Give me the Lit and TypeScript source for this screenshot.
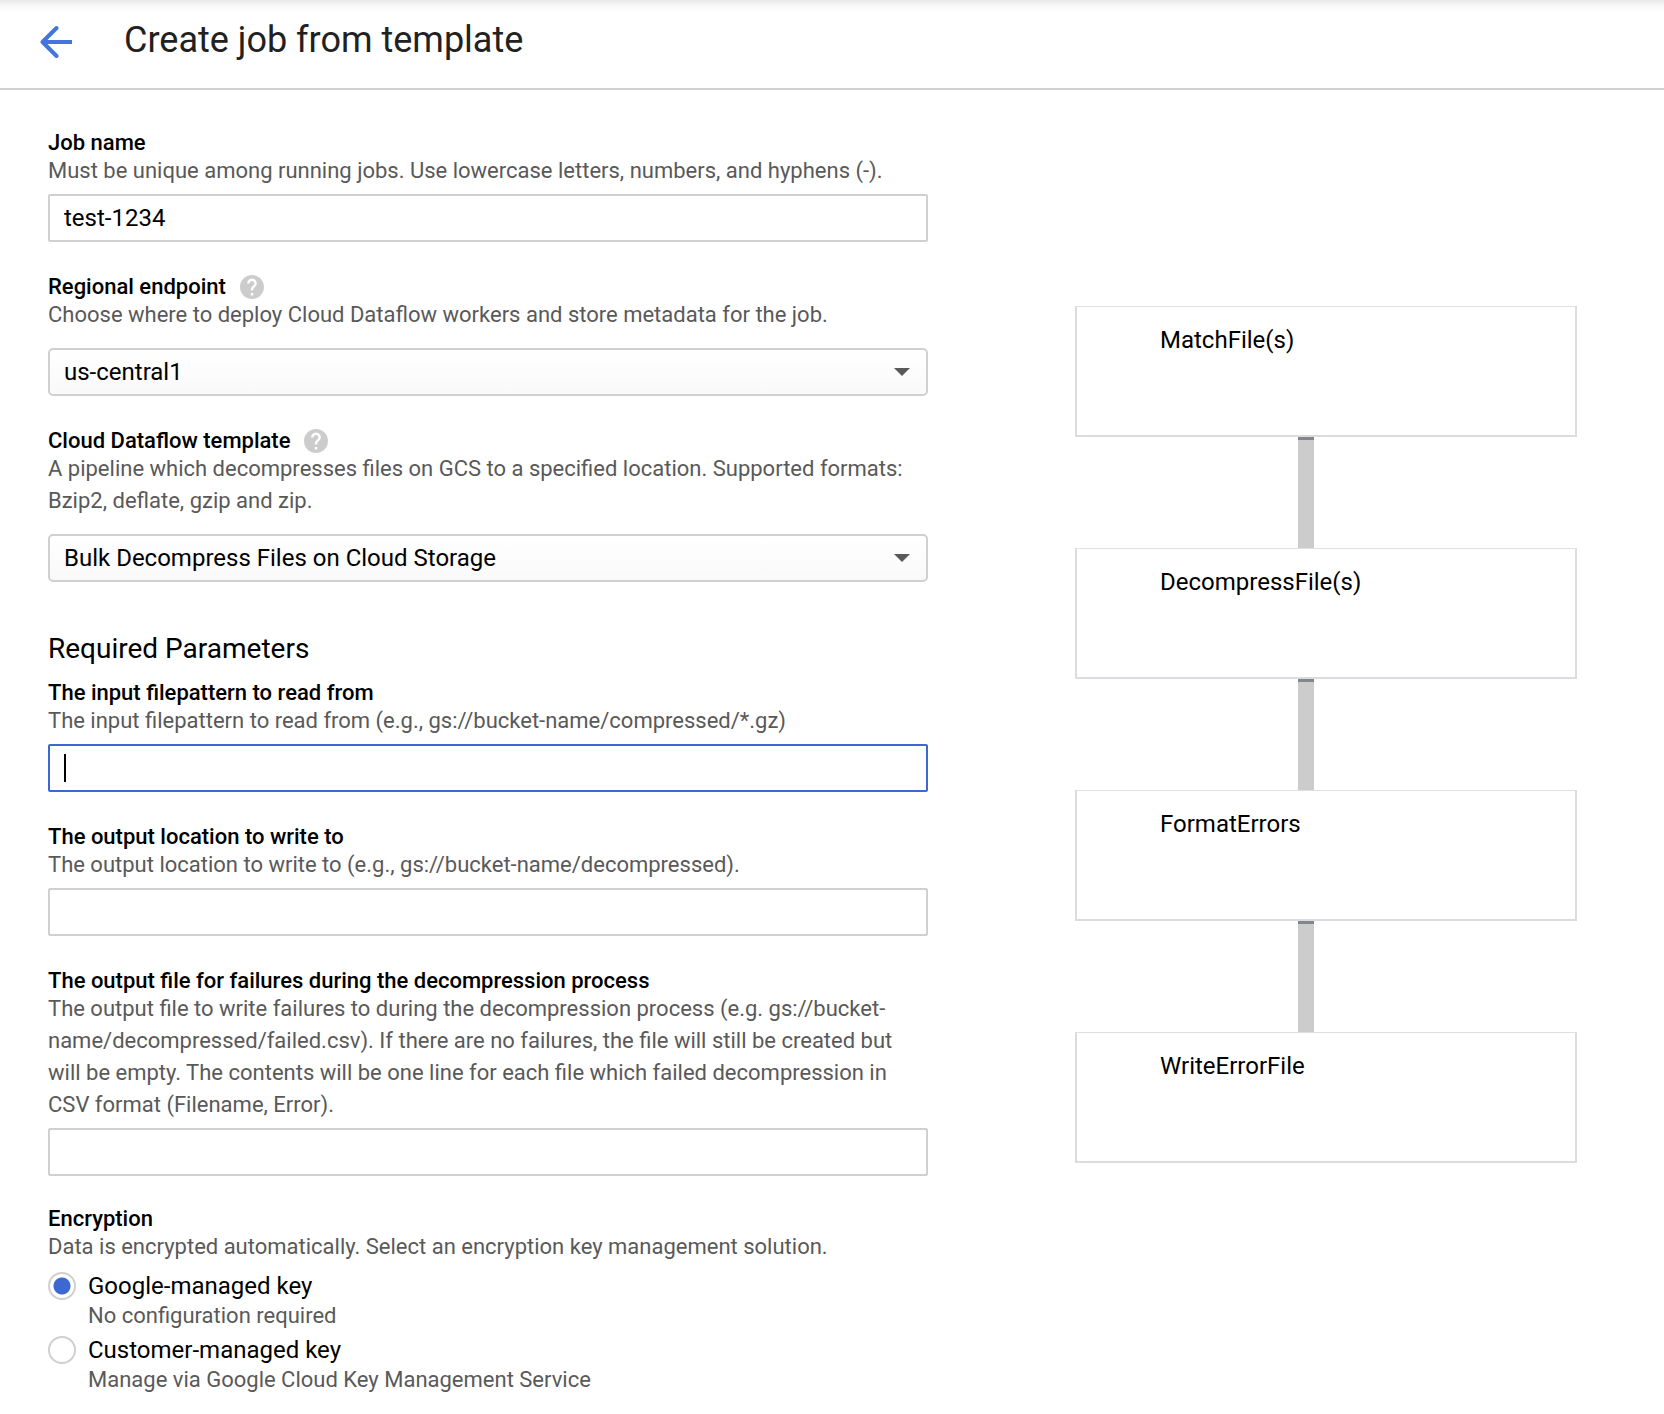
import { LitElement, html, css, svg, nothing } from "lit";
import { customElement, property, state } from "lit/decorators.js";
import { classMap } from "lit/directives/class-map.js";

const helpGlyph = svg`<path d="M12 2C6.48 2 2 6.48 2 12s4.48 10 10 10 10-4.48 10-10S17.52 2 12 2zm1 17h-2v-2h2v2zm2.07-7.75l-.9.92C13.45 12.9 13 13.5 13 15h-2v-.5c0-1.1.45-2.1 1.17-2.83l1.24-1.26c.37-.36.59-.86.59-1.41 0-1.1-.9-2-2-2s-2 .9-2 2H8c0-2.21 1.79-4 4-4s4 1.79 4 4c0 .88-.36 1.68-.93 2.25z"/>`;

interface Field {
  id: string;
  label: string;
  hint: string;
  kind: "text" | "select";
  value?: string;
  help?: boolean;
  active?: boolean;
}

const jobFields: Field[] = [
  {
    id: "job-name",
    label: "Job name",
    hint: "Must be unique among running jobs. Use lowercase letters, numbers, and hyphens (-).",
    kind: "text",
    value: "test-1234",
  },
  {
    id: "region",
    label: "Regional endpoint",
    hint: "Choose where to deploy Cloud Dataflow workers and store metadata for the job.",
    kind: "select",
    value: "us-central1",
    help: true,
  },
  {
    id: "template",
    label: "Cloud Dataflow template",
    hint: "A pipeline which decompresses files on GCS to a specified location. Supported formats: Bzip2, deflate, gzip and zip.",
    kind: "select",
    value: "Bulk Decompress Files on Cloud Storage",
    help: true,
  },
];

const requiredFields: Field[] = [
  {
    id: "input-pattern",
    label: "The input filepattern to read from",
    hint: "The input filepattern to read from (e.g., gs://bucket-name/compressed/*.gz)",
    kind: "text",
    active: true,
  },
  {
    id: "output-location",
    label: "The output location to write to",
    hint: "The output location to write to (e.g., gs://bucket-name/decompressed).",
    kind: "text",
  },
  {
    id: "failure-file",
    label: "The output file for failures during the decompression process",
    hint: "The output file to write failures to during the decompression process (e.g. gs://bucket-name/decompressed/failed.csv). If there are no failures, the file will still be created but will be empty. The contents will be one line for each file which failed decompression in CSV format (Filename, Error).",
    kind: "text",
  },
];

const keyOptions = [
  { id: "google", label: "Google-managed key", hint: "No configuration required" },
  { id: "customer", label: "Customer-managed key", hint: "Manage via Google Cloud Key Management Service" },
];

const steps = ["MatchFile(s)", "DecompressFile(s)", "FormatErrors", "WriteErrorFile"];

@customElement("job-field")
class JobField extends LitElement {
  @property({ attribute: false }) field!: Field;

  static styles = css`
    :host {
      display: block;
    }
    .head {
      display: flex;
      align-items: center;
      gap: 14px;
    }
    .label {
      font-weight: 500;
      line-height: 24px;
      color: #000;
    }
    .help {
      display: block;
      width: 24px;
      height: 24px;
      padding: 0;
      border: 0;
      background: none;
    }
    .help svg {
      display: block;
      width: 24px;
      height: 24px;
      fill: #ccc;
    }
    .hint {
      margin: 0 0 7px;
      line-height: 32px;
      color: #595959;
    }
    .hint.roomy {
      margin-bottom: 17px;
    }
    .box {
      position: relative;
    }
    .control {
      display: block;
      box-sizing: border-box;
      width: 100%;
      height: 48px;
      margin: 0;
      padding: 0 14px;
      border: 2px solid #d0d0d0;
      border-radius: 2px;
      outline: none;
      background: #fff;
      color: #000;
      font: 400 24px/32px Roboto, sans-serif;
    }
    .control.active {
      border-color: #3c69d1;
      caret-color: transparent;
    }
    .control.select {
      appearance: none;
      border-radius: 5px;
      background: linear-gradient(#fff, #f9f9f9);
    }
    .arrow {
      position: absolute;
      top: 20px;
      right: 18px;
      width: 16px;
      height: 8px;
      fill: #595959;
      pointer-events: none;
    }
    .caret {
      position: absolute;
      top: 10px;
      left: 16px;
      width: 2px;
      height: 28px;
      background: #000;
      pointer-events: none;
    }
  `;

  render() {
    const f = this.field;
    const select = f.kind === "select";
    return html`
      <div class="head">
        <label class="label" for=${f.id}>${f.label}</label>
        ${f.help
          ? html`<button class="help" type="button" aria-label="Help">
              <svg viewBox="2 2 20 20">${helpGlyph}</svg>
            </button>`
          : nothing}
      </div>
      <p class=${classMap({ hint: true, roomy: select })} id="${f.id}-hint">${f.hint}</p>
      <div class="box">
        ${select
          ? html`<select class="control select" id=${f.id} aria-describedby="${f.id}-hint">
                <option>${f.value}</option>
              </select>
              <svg class="arrow" viewBox="0 0 16 8" aria-hidden="true"><path d="M0 0h16L8 8z" /></svg>`
          : html`<input
              class=${classMap({ control: true, active: !!f.active })}
              id=${f.id}
              type="text"
              aria-describedby="${f.id}-hint"
              .value=${f.value ?? ""}
            />`}
        ${f.active ? html`<span class="caret"></span>` : nothing}
      </div>
    `;
  }
}

@customElement("pipeline-graph")
class PipelineGraph extends LitElement {
  static styles = css`
    :host {
      display: block;
    }
    .steps {
      margin: 0;
      padding: 0;
      list-style: none;
    }
    .node {
      box-sizing: border-box;
      height: 131px;
      padding: 17px 83px;
      border: 2px solid #dadce0;
      border-top: 1px solid #dfe0e3;
      font-size: 24px;
      line-height: 32px;
      color: #000;
    }
    .edge {
      box-sizing: border-box;
      width: 16px;
      height: 111px;
      margin-left: 223px;
      border-top: 3px solid #80868b;
      background: #ccc;
    }
  `;

  render() {
    return html`<ol class="steps">
      ${steps.map(
        (name, i) => html`<li>
          <div class="node">${name}</div>
          ${i < steps.length - 1 ? html`<div class="edge"></div>` : nothing}
        </li>`
      )}
    </ol>`;
  }
}

@customElement("app-root")
class AppRoot extends LitElement {
  @state() private key = "google";

  static styles = css`
    :host {
      display: block;
      background: #fff;
      color: #000;
      font: 400 22px/32px Roboto, sans-serif;
    }
    .bar {
      display: flex;
      align-items: center;
      gap: 50px;
      box-sizing: border-box;
      height: 90px;
      padding: 0 38px 8px;
      border-bottom: 2px solid #d0d0d0;
      background: linear-gradient(#e8e8e8, #f7f7f7 5px, #fff 12px);
    }
    .back {
      display: block;
      width: 36px;
      height: 36px;
    }
    .back svg {
      display: block;
      width: 36px;
      height: 36px;
      fill: none;
      stroke: #4374e0;
      stroke-width: 4;
      stroke-linejoin: round;
    }
    .chevron {
      stroke-linecap: round;
    }
    .title {
      margin: 0;
      font-size: 36px;
      font-weight: 400;
      line-height: 48px;
      color: #212121;
    }
    .page {
      display: grid;
      grid-template-columns: minmax(0, 880fr) minmax(0, 502fr);
      column-gap: 147px;
      align-items: start;
      padding: 41px 87px 8px 48px;
    }
    .form {
      display: flex;
      flex-direction: column;
      gap: 33px;
    }
    .section {
      margin: 16px 0 -19px;
      font-size: 28px;
      font-weight: 400;
      line-height: 36px;
    }
    .encryption {
      min-width: 0;
      margin: -2px 0 0;
      padding: 0;
      border: 0;
    }
    .legend {
      padding: 0;
      font-weight: 500;
      line-height: 24px;
    }
    .hint {
      margin: 0 0 7px;
      color: #595959;
    }
    .options {
      display: grid;
      gap: 4px;
    }
    .option {
      display: grid;
      grid-template-columns: 28px 1fr;
      column-gap: 12px;
      align-items: center;
    }
    .radio {
      appearance: none;
      box-sizing: border-box;
      width: 28px;
      height: 28px;
      margin: 0;
      border: 2px solid #d0d0d0;
      border-radius: 50%;
      background: #fff;
    }
    .radio:checked {
      background: radial-gradient(circle, #3c69d1 0 8px, #fff 9px);
    }
    .name {
      font-size: 24px;
    }
    .note {
      grid-column: 2;
      line-height: 28px;
      color: #595959;
    }
    .graph {
      margin-top: 175px;
    }
  `;

  render() {
    return html`
      <header class="bar">
        <a class="back" href="#" aria-label="Back">
          <svg viewBox="0 0 36 36">
            <path d="M34 20H5" />
            <path class="chevron" d="M18.500 6L4.500 20L18.500 34" />
          </svg>
        </a>
        <h1 class="title">Create job from template</h1>
      </header>
      <main class="page">
        <form class="form">
          ${jobFields.map((f) => html`<job-field .field=${f}></job-field>`)}
          <h2 class="section">Required Parameters</h2>
          ${requiredFields.map((f) => html`<job-field .field=${f}></job-field>`)}
          <fieldset class="encryption">
            <legend class="legend">Encryption</legend>
            <p class="hint">Data is encrypted automatically. Select an encryption key management solution.</p>
            <div class="options">
              ${keyOptions.map(
                (o) => html`<div class="option">
                  <input
                    class="radio"
                    type="radio"
                    name="key"
                    id=${o.id}
                    aria-describedby="${o.id}-note"
                    .checked=${this.key === o.id}
                    @change=${() => (this.key = o.id)}
                  />
                  <label class="name" for=${o.id}>${o.label}</label>
                  <span class="note" id="${o.id}-note">${o.hint}</span>
                </div>`
              )}
            </div>
          </fieldset>
        </form>
        <pipeline-graph class="graph"></pipeline-graph>
      </main>
    `;
  }
}
